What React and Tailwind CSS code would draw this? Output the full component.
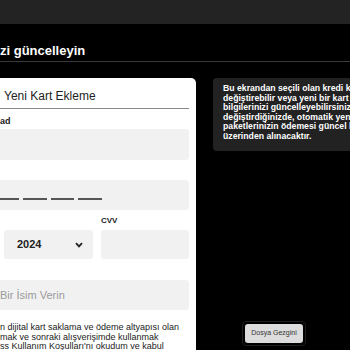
import React from 'react';

export default function App() {

  const infoLines = [
    'Bu ekrandan seçili olan kredi kartınızı',
    'değiştirebilir veya yeni bir kart ekleyerek',
    'bilgilerinizi güncelleyebilirsiniz. Kartınızı',
    'değiştirdiğinizde, otomatik yenilenen',
    'paketlerinizin ödemesi güncel kartınız',
    'üzerinden alınacaktır.',
  ];

  const terms = [
    'n dijital kart saklama ve ödeme altyapısı olan',
    'mak ve sonraki alışverişimde kullanmak',
    'ss Kullanım Koşulları\'nı okudum ve kabul',
  ];

  return (
    <div className="w-[350px] h-[350px] overflow-hidden bg-black font-['Liberation_Sans',Arial,sans-serif]">

      {/* top bar */}
      <div className="h-[24px] bg-[#232323]"></div>

      {/* page title */}
      <div className="h-[38px] border-b border-[#3a3a3a] pt-[19px]">
        <h1 className="text-[13px] leading-[16px] font-semibold text-white whitespace-nowrap">zi güncelleyin</h1>
      </div>

      <div className="flex pt-[16px]">

        {/* card */}
        <div className="w-[196px] h-[280px] shrink-0 bg-white rounded-tr-[5px] pr-[7px] overflow-hidden">

          <div className="pt-[10px] pb-[4px] border-b border-[#8a8a8a] pl-[4px] text-[12px] leading-[16px] text-[#222] whitespace-nowrap">
            Yeni Kart Ekleme
          </div>

          <div className="mt-[7px] text-[9px] leading-[10px] font-bold text-[#222]">ad</div>
          <div className="mt-[3px] h-[31px] bg-[#f1f1f1] rounded-r-[3px]"></div>

          <div className="mt-[20px] h-[30px] bg-[#f1f1f1] rounded-r-[3px] pt-[18px]">
            <div className="flex gap-[4px]">
              <div className="w-[19px] h-[1.5px] bg-[#555]"></div>
              <div className="w-[24px] h-[1.5px] bg-[#555]"></div>
              <div className="w-[23px] h-[1.5px] bg-[#555]"></div>
              <div className="w-[24px] h-[1.5px] bg-[#555]"></div>
            </div>
          </div>

          <div className="mt-[6px] grid grid-cols-[89px_88px] gap-x-[8px] pl-[4px]">
            <div></div>
            <div className="text-[8px] leading-[10px] font-bold text-[#222]">CVV</div>
            <div className="mt-[4px] h-[29px] bg-[#f1f1f1] rounded-[3px] flex items-center justify-between pl-[13px] pr-[10px]">
              <span className="text-[11px] font-bold text-[#222]">2024</span>
              <svg width="8" height="6" viewBox="0 0 8 6">
                <polyline points="1,1.2 4,4.4 7,1.2" fill="none" stroke="#222" strokeWidth="1.8" />
              </svg>
            </div>
            <div className="mt-[4px] h-[29px] bg-[#f1f1f1] rounded-[3px]"></div>
          </div>

          <div className="mt-[21px] h-[30px] bg-[#f1f1f1] rounded-r-[3px] flex items-center">
            <span className="text-[11px] text-[#9a9a9a] whitespace-nowrap">Bir İsim Verin</span>
          </div>

          <div className="mt-[13px] text-[9px] leading-[9.5px] text-[#222]">
            {terms.map((line) => (
              <div key={line} className="whitespace-nowrap">{line}</div>
            ))}
          </div>
        </div>

        {/* right column */}
        <div className="ml-[17px] flex-1 min-w-0">
          <div className="h-[73px] bg-[#222] rounded-l-[4px] pl-[10px] pt-[6px] overflow-hidden">
            {infoLines.map((line) => (
              <div key={line} className="text-[8.7px] leading-[9.5px] font-bold text-white whitespace-nowrap">{line}</div>
            ))}
          </div>

          <div className="mt-[170px] ml-[29px] w-[64px] p-[2px] border border-[#1e1e1e] rounded-[4px]">
            <div className="h-[19px] bg-[#dddddd] rounded-[3px] flex items-center justify-center">
              <span className="text-[7px] text-[#333]">Dosya Gezgini</span>
            </div>
          </div>
        </div>

      </div>
    </div>
  )
}
